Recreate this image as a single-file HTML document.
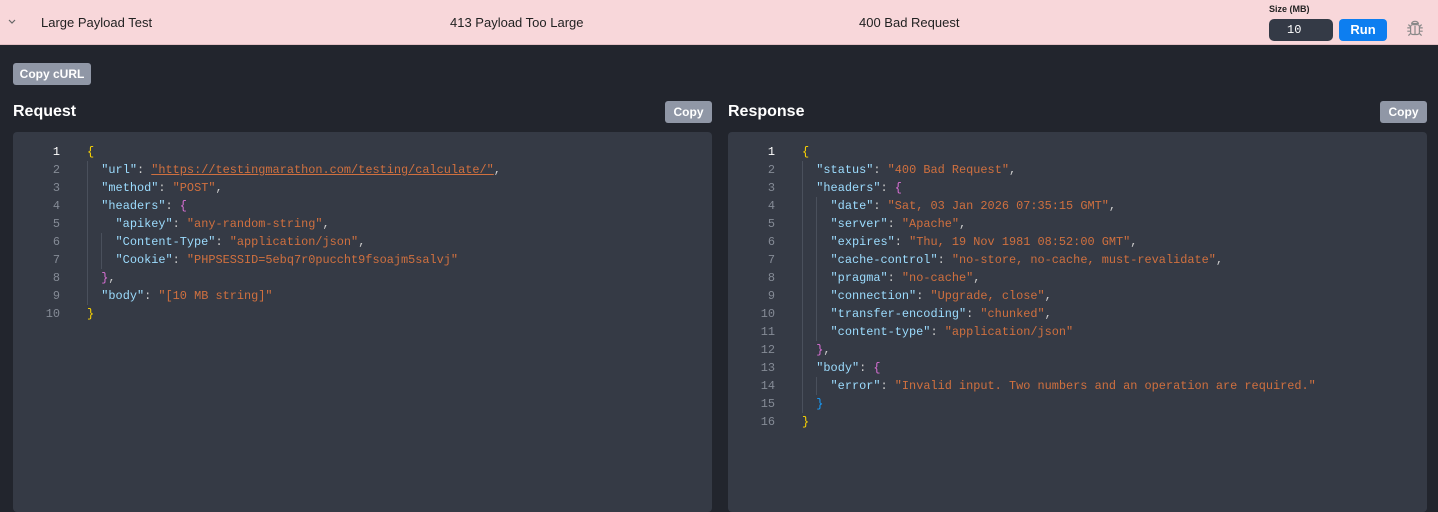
<!DOCTYPE html>
<html><head><meta charset="utf-8"><style>
*{margin:0;padding:0;box-sizing:border-box}
body{width:1438px;height:493px;overflow:hidden;background:#22252d;font-family:"Liberation Sans",sans-serif;position:relative}
.top{position:absolute;left:0;top:0;width:1438px;height:45px;background:#f8d7da;border-bottom:1px solid #e3bfc3;color:#222;font-size:13px}
.top span{position:absolute;top:15px}
.btn{position:absolute;background:#9097a6;color:#fff;font-weight:bold;font-size:12px;border-radius:3px;text-align:center;line-height:22px;height:22px}
h2{position:absolute;color:#fff;font-size:16px;font-weight:bold}
.panel{position:absolute;top:132px;height:380px;width:699px;background:#353a45;border-radius:4px}
.code{position:absolute;top:143px;font-family:"Liberation Mono",monospace;font-size:11.9px;line-height:18px;white-space:pre}
.ln{position:absolute;top:143px;font-family:"Liberation Mono",monospace;font-size:11.9px;line-height:18px;text-align:right;width:30px;color:#858b96;white-space:pre}
.k{color:#9cdcfe}.s{color:#d0703f}.p{color:#ccc}.y{color:#ffd700}.m{color:#da70d6}.b{color:#179fff}.u{color:#d0703f;text-decoration:underline}
.g{position:absolute;width:1px;background:#4a505c}
</style></head><body>
<div class="top">
<svg style="position:absolute;left:7px;top:18px" width="10" height="8" viewBox="0 0 10 8"><path d="M2 2l3 3 3-3" stroke="#666" stroke-width="1.2" fill="none"/></svg>
<span style="left:41px">Large Payload Test</span>
<span style="left:450px">413 Payload Too Large</span>
<span style="left:859px">400 Bad Request</span>
<div style="position:absolute;left:1269px;top:4px;font-size:9px;font-weight:bold">Size (MB)</div>
<div style="position:absolute;left:1269px;top:19px;width:64px;height:22px;background:#343a46;border-radius:5px;color:#fff;font-family:'Liberation Mono',monospace;font-size:12px;line-height:22px;padding-left:18px">10</div>
<div style="position:absolute;left:1339px;top:19px;width:48px;height:22px;background:#0d7ef0;border-radius:4px;color:#fff;font-weight:bold;font-size:13px;line-height:22px;text-align:center">Run</div>
<svg style="position:absolute;left:1404px;top:18px" width="22" height="22" viewBox="0 0 20 20" fill="none" stroke="#888" stroke-width="1.1"><path d="M7 5a3 2 0 0 1 6 0z"/><rect x="6" y="6" width="8" height="9" rx="2"/><path d="M10 7v8M6 9H3M14 9h3M6 12H3M14 12h3M6 8L4 6M14 8l2-2M6 14l-2 2M14 14l2 2"/></svg>
</div>
<div class="btn" style="left:13px;top:63px;width:78px">Copy cURL</div>
<h2 style="left:13px;top:103px">Request</h2>
<div class="btn" style="left:665px;top:101px;width:47px">Copy</div>
<h2 style="left:728px;top:103px">Response</h2>
<div class="btn" style="left:1380px;top:101px;width:47px">Copy</div>
<div class="panel" style="left:13px"></div>
<div class="panel" style="left:728px"></div>
<div class="g" style="left:87px;top:161px;height:144px"></div>
<div class="g" style="left:101px;top:233px;height:36px"></div>
<div class="g" style="left:802px;top:161px;height:252px"></div>
<div class="g" style="left:816px;top:197px;height:144px"></div>
<div class="g" style="left:816px;top:377px;height:18px"></div>
<div class="ln" style="left:30px"><span style="color:#fff">1</span>
2
3
4
5
6
7
8
9
10</div>
<div class="code" style="left:87px"><span class="y">{</span>
  <span class="k">"url"</span><span class="p">: </span><span class="u">"https://testingmarathon.com/testing/calculate/"</span><span class="p">,</span>
  <span class="k">"method"</span><span class="p">: </span><span class="s">"POST"</span><span class="p">,</span>
  <span class="k">"headers"</span><span class="p">: </span><span class="m">{</span>
    <span class="k">"apikey"</span><span class="p">: </span><span class="s">"any-random-string"</span><span class="p">,</span>
    <span class="k">"Content-Type"</span><span class="p">: </span><span class="s">"application/json"</span><span class="p">,</span>
    <span class="k">"Cookie"</span><span class="p">: </span><span class="s">"PHPSESSID=5ebq7r0puccht9fsoajm5salvj"</span>
  <span class="m">}</span><span class="p">,</span>
  <span class="k">"body"</span><span class="p">: </span><span class="s">"[10 MB string]"</span>
<span class="y">}</span></div>
<div class="ln" style="left:745px"><span style="color:#fff">1</span>
2
3
4
5
6
7
8
9
10
11
12
13
14
15
16</div>
<div class="code" style="left:802px"><span class="y">{</span>
  <span class="k">"status"</span><span class="p">: </span><span class="s">"400 Bad Request"</span><span class="p">,</span>
  <span class="k">"headers"</span><span class="p">: </span><span class="m">{</span>
    <span class="k">"date"</span><span class="p">: </span><span class="s">"Sat, 03 Jan 2026 07:35:15 GMT"</span><span class="p">,</span>
    <span class="k">"server"</span><span class="p">: </span><span class="s">"Apache"</span><span class="p">,</span>
    <span class="k">"expires"</span><span class="p">: </span><span class="s">"Thu, 19 Nov 1981 08:52:00 GMT"</span><span class="p">,</span>
    <span class="k">"cache-control"</span><span class="p">: </span><span class="s">"no-store, no-cache, must-revalidate"</span><span class="p">,</span>
    <span class="k">"pragma"</span><span class="p">: </span><span class="s">"no-cache"</span><span class="p">,</span>
    <span class="k">"connection"</span><span class="p">: </span><span class="s">"Upgrade, close"</span><span class="p">,</span>
    <span class="k">"transfer-encoding"</span><span class="p">: </span><span class="s">"chunked"</span><span class="p">,</span>
    <span class="k">"content-type"</span><span class="p">: </span><span class="s">"application/json"</span>
  <span class="m">}</span><span class="p">,</span>
  <span class="k">"body"</span><span class="p">: </span><span class="m">{</span>
    <span class="k">"error"</span><span class="p">: </span><span class="s">"Invalid input. Two numbers and an operation are required."</span>
  <span class="b">}</span>
<span class="y">}</span></div>
</body></html>
